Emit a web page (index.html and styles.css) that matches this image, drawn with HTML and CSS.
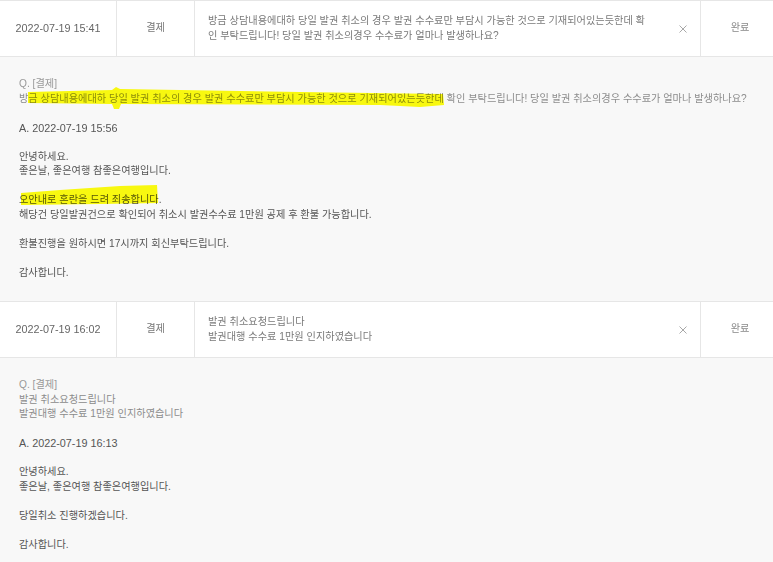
FILE: index.html
```html
<!DOCTYPE html>
<html lang="ko">
<head>
<meta charset="utf-8">
<title>문의내역</title>
<link rel="stylesheet" href="styles.css">
</head>
<body>
<div class="list">
  <div class="row">
    <div class="cell date">2022-07-19 15:41</div>
    <div class="cell cat">결제</div>
    <div class="cell subject">
      <div class="subject-text">방금 상담내용에대하 당일 발권 취소의 경우 발권 수수료만 부담시 가능한 것으로 기재되어있는듯한데 확인 부탁드립니다! 당일 발권 취소의경우 수수료가 얼마나 발생하나요?</div>
      <svg class="close" viewBox="0 0 8 8" width="8" height="8"><path d="M0.5 0.5 L7.5 7.5 M7.5 0.5 L0.5 7.5" stroke="#a8a8a8" stroke-width="1" fill="none"/></svg>
    </div>
    <div class="cell status">완료</div>
  </div>
  <div class="detail">
    <svg class="marker" viewBox="0 0 779 244" width="779" height="244">
      <path d="M28,35 L112,33 L116,30 L120,32 L300,35 L443,37 L444,48 L420,50 L380,48 L121,47 L119,52 L114,52 L112,47 L28,46 Z" fill="#ffff10"/>
      <path d="M21,136 L60,133 L120,129 L157,128 L158,146 L100,147 L21,148 Z" fill="#ffff10"/>
    </svg>
    <div class="q">
      <div class="q-label">Q. [결제]</div>
      <div>방금 상담내용에대하 당일 발권 취소의 경우 발권 수수료만 부담시 가능한 것으로 기재되어있는듯한데 확인 부탁드립니다! 당일 발권 취소의경우 수수료가 얼마나 발생하나요?</div>
    </div>
    <div class="a">
      <div class="a-date">A. 2022-07-19 15:56</div>
      <br>
      <div>안녕하세요.</div>
      <div>좋은날, 좋은여행 참좋은여행입니다.</div>
      <br>
      <div>오안내로 혼란을 드려 죄송합니다.</div>
      <div>해당건 당일발권건으로 확인되어 취소시 발권수수료 1만원 공제 후 환불 가능합니다.</div>
      <br>
      <div>환불진행을 원하시면 17시까지 회신부탁드립니다.</div>
      <br>
      <div>감사합니다.</div>
    </div>
  </div>
  <div class="row">
    <div class="cell date">2022-07-19 16:02</div>
    <div class="cell cat">결제</div>
    <div class="cell subject">
      <div class="subject-text">발권 취소요청드립니다<br>발권대행 수수료 1만원 인지하였습니다</div>
      <svg class="close" viewBox="0 0 8 8" width="8" height="8"><path d="M0.5 0.5 L7.5 7.5 M7.5 0.5 L0.5 7.5" stroke="#a8a8a8" stroke-width="1" fill="none"/></svg>
    </div>
    <div class="cell status">완료</div>
  </div>
  <div class="detail">
    <div class="q">
      <div class="q-label">Q. [결제]</div>
      <div>발권 취소요청드립니다</div>
      <div>발권대행 수수료 1만원 인지하였습니다</div>
    </div>
    <div class="a">
      <div class="a-date">A. 2022-07-19 16:13</div>
      <br>
      <div>안녕하세요.</div>
      <div>좋은날, 좋은여행 참좋은여행입니다.</div>
      <br>
      <div>당일취소 진행하겠습니다.</div>
      <br>
      <div>감사합니다.</div>
    </div>
  </div>
</div>
</body>
</html>
```
FILE: styles.css
```css
html, body {
  margin: 0;
  padding: 0;
  overflow: hidden;
  background: #ffffff;
}
body {
  font-family: "Liberation Sans", "Noto Sans CJK KR", sans-serif;
  font-size: 10.2px;
  letter-spacing: 0;
  line-height: 14.5px;
  color: #666;
}
.list {
  width: 779px;
}
.row {
  display: grid;
  grid-template-columns: 117px 78px 506px 78px;
  height: 57px;
  box-sizing: border-box;
  border-top: 1px solid #e6e6e6;
  border-bottom: 1px solid #e6e6e6;
  background: #fff;
}
.cell {
  box-sizing: border-box;
  display: flex;
  align-items: center;
}
.date, .cat, .subject {
  border-right: 1px solid #e6e6e6;
}
.date {
  justify-content: center;
  font-size: 10.8px;
  color: #666;
}
.cat {
  justify-content: center;
  color: #777;
}
.subject {
  padding: 0 13px;
  gap: 33px;
  color: #7a7a7a;
}
.subject-text {
  flex: 1;
  min-width: 0;
}
.close {
  flex: none;
  display: block;
}
.status {
  justify-content: center;
  color: #888;
}
.detail {
  position: relative;
  background: #f8f8f8;
  padding: 20px 19px 20px;
  height: 244px;
  box-sizing: border-box;
}
.marker {
  position: absolute;
  left: 0;
  top: 0;
  mix-blend-mode: multiply;
  pointer-events: none;
}
.q {
  color: #8c8c8c;
  margin-bottom: 14.5px;
}
.q-label {
  color: #999;
}
.a {
  color: #555;
}
.a-date {
  font-size: 10.8px;
}
```
